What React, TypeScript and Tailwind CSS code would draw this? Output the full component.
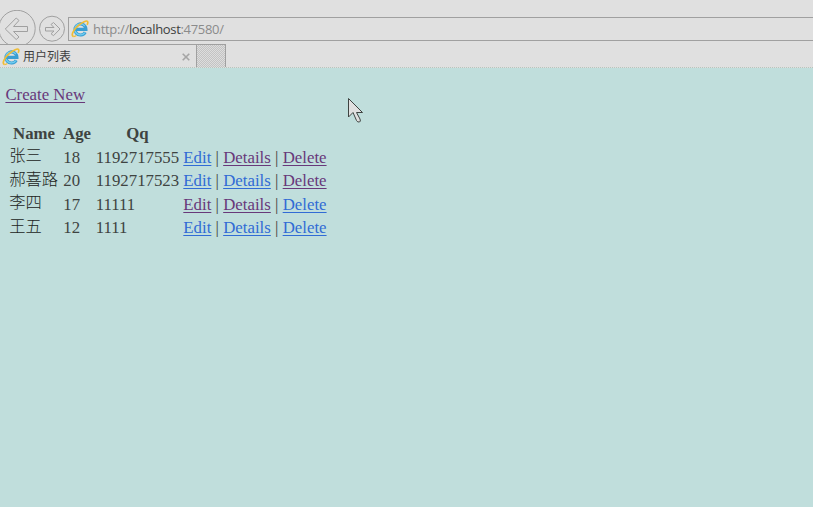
const serif = "font-['Liberation_Serif','Noto_Sans_CJK_SC',serif]";

function IeLogo() {
  return (
    <svg width="18" height="18" viewBox="0 0 18 18" fill="none" className="block shrink-0">
      <path d="M14.2 12.2A5.5 5.5 0 1 1 14.9 9.4H5" stroke="#3a9fd3" strokeWidth="3.2" />
      <path d="M13.8 12.6A5.6 5.6 0 0 1 4 11" stroke="#72cdf0" strokeWidth="1.4" />
      <path d="M3.8 8.3A5.8 5.8 0 0 1 13.8 6" stroke="#7bcbea" strokeWidth="1.2" />
      <path d="M2.3 16.4C-.7 15 3.4 8.8 7.8 5.2C11.6 2 15.5.2 16.5 1.5C17 2.2 16.8 3.5 16.1 4.8" stroke="#efbd35" strokeWidth="1.7" />
      <path d="M2.3 16.4C3.2 16.7 4.4 16.2 5.4 15.5" stroke="#efbd35" strokeWidth="1.3" />
    </svg>
  );
}

type Row = { name: string; age: string; qq: string; visited: boolean[]; size: string; shift: string };
const rows: Row[] = [
  { name: "张三", age: "18", qq: "1192717555", visited: [false, true, true], size: "h-[23px]", shift: "pb-[3px]" },
  { name: "郝喜路", age: "20", qq: "1192717523", visited: [false, false, true], size: "h-[24px]", shift: "pb-[3px]" },
  { name: "李四", age: "17", qq: "11111", visited: [true, true, false], size: "h-[23px]", shift: "pb-[4px]" },
  { name: "王五", age: "12", qq: "1111", visited: [false, false, false], size: "h-[24px]", shift: "pb-[2px]" },
];

function Link({ children, visited }: { children: string; visited: boolean }) {
  return (
    <a href="#" className={`underline decoration-1 underline-offset-[2px] ${visited ? "text-[#68387a]" : "text-[#316bd5]"}`}>
      {children}
    </a>
  );
}

export default function App() {
  return (
    <div className={`h-[507px] w-[813px] overflow-hidden bg-[#c0dedc] text-[#3e4341] ${serif}`}>
      <header className="h-[68px] bg-[#e0e0e0] pt-[10px] font-['Open_Sans','Noto_Sans_CJK_SC',sans-serif]">
        <div className="flex h-[34px] overflow-hidden">
          <svg width="68" height="34" viewBox="0 10 68 34" fill="none" stroke="#a0a0a0" className="block shrink-0">
            <circle cx="17" cy="28.5" r="18.2" />
            <path d="M5.3 29L16.2 18L19 20.5L13.5 26.5H27.5V31.5H13.5L19 37L16.2 39.5Z" />
            <circle cx="52" cy="28.7" r="12.5" />
            <path d="M60 29L53.5 22.5L51 24.5L54 27.5H45.5V31H54L51 33.7L53.5 35.7Z" />
          </svg>
          <div className="mt-[7px] flex h-[24px] w-[746px] shrink-0 items-center border border-[#a0a0a0] pl-[2px]">
            <IeLogo />
            <span className="ml-[4px] whitespace-nowrap text-[13px] leading-[22px] tracking-[-0.32px] text-[#8b8b8b]">
              http://<span className="text-[#3e3e3e]">localhost</span>:47580/
            </span>
          </div>
        </div>
        <div className="flex h-[24px] border-b border-dotted border-[#b9c5bd]">
          <div className="flex w-[197px] items-center border-t border-r border-solid border-[#a0a0a0] pt-px pl-[2px]">
            <IeLogo />
            <span className="ml-[3px] text-[12px] leading-[18px] text-[#3e3e3e]">用户列表</span>
            <svg width="8" height="8" viewBox="0 0 8 8" className="mr-[6px] ml-auto" stroke="#a5a5a5" strokeWidth="1.6">
              <path d="M.7.7L7.3 7.3M7.3.7L.7 7.3" />
            </svg>
          </div>
          <div className="w-[29px] border-t border-r border-[#a0a0a0] bg-[#cecece] bg-[repeating-conic-gradient(#c3c3c3_0_25%,#dddddd_0_50%)] bg-[length:2px_2px]" />
        </div>
      </header>
      <main className="bg-[#c0dedc] pt-[17px] text-[16.8px] leading-[20px]">
        <div className="h-[38px] pl-[5.4px]"><Link visited>Create New</Link></div>
        <div className="grid h-[23px] grid-cols-[48px_28px_83px] gap-x-[5px] pt-[1px] pl-[10px] text-center font-bold">
          <span>Name</span><span>Age</span><span>Qq</span>
        </div>
        {rows.map((row) => (
          <div key={row.name} className={`grid grid-cols-[54px_32.5px_87.5px_160px] pl-[9.3px] whitespace-nowrap ${row.size}`}>
            <span className={`flex items-center text-[16.3px] font-light text-[#202422] ${row.shift}`}>{row.name}</span>
            <span className="pt-[2px]">{row.age}</span>
            <span className="pt-[2px]">{row.qq}</span>
            <span className="pt-[2px] tracking-[0.02px]">
              <Link visited={row.visited[0]}>Edit</Link> | <Link visited={row.visited[1]}>Details</Link> | <Link visited={row.visited[2]}>Delete</Link>
            </span>
          </div>
        ))}
      </main>
      <svg width="16" height="26" viewBox="0 0 16 26" className="absolute top-[97px] left-[348px]">
        <path d="M.5 1.5V20L5 15.5L8.5 23.5Q9.5 25.5 11.5 25Q13 24.5 12 22L8.5 15.5H14.5Z" fill="#e0e0e0" stroke="#3e4341" strokeWidth="1" />
      </svg>
    </div>
  );
}
